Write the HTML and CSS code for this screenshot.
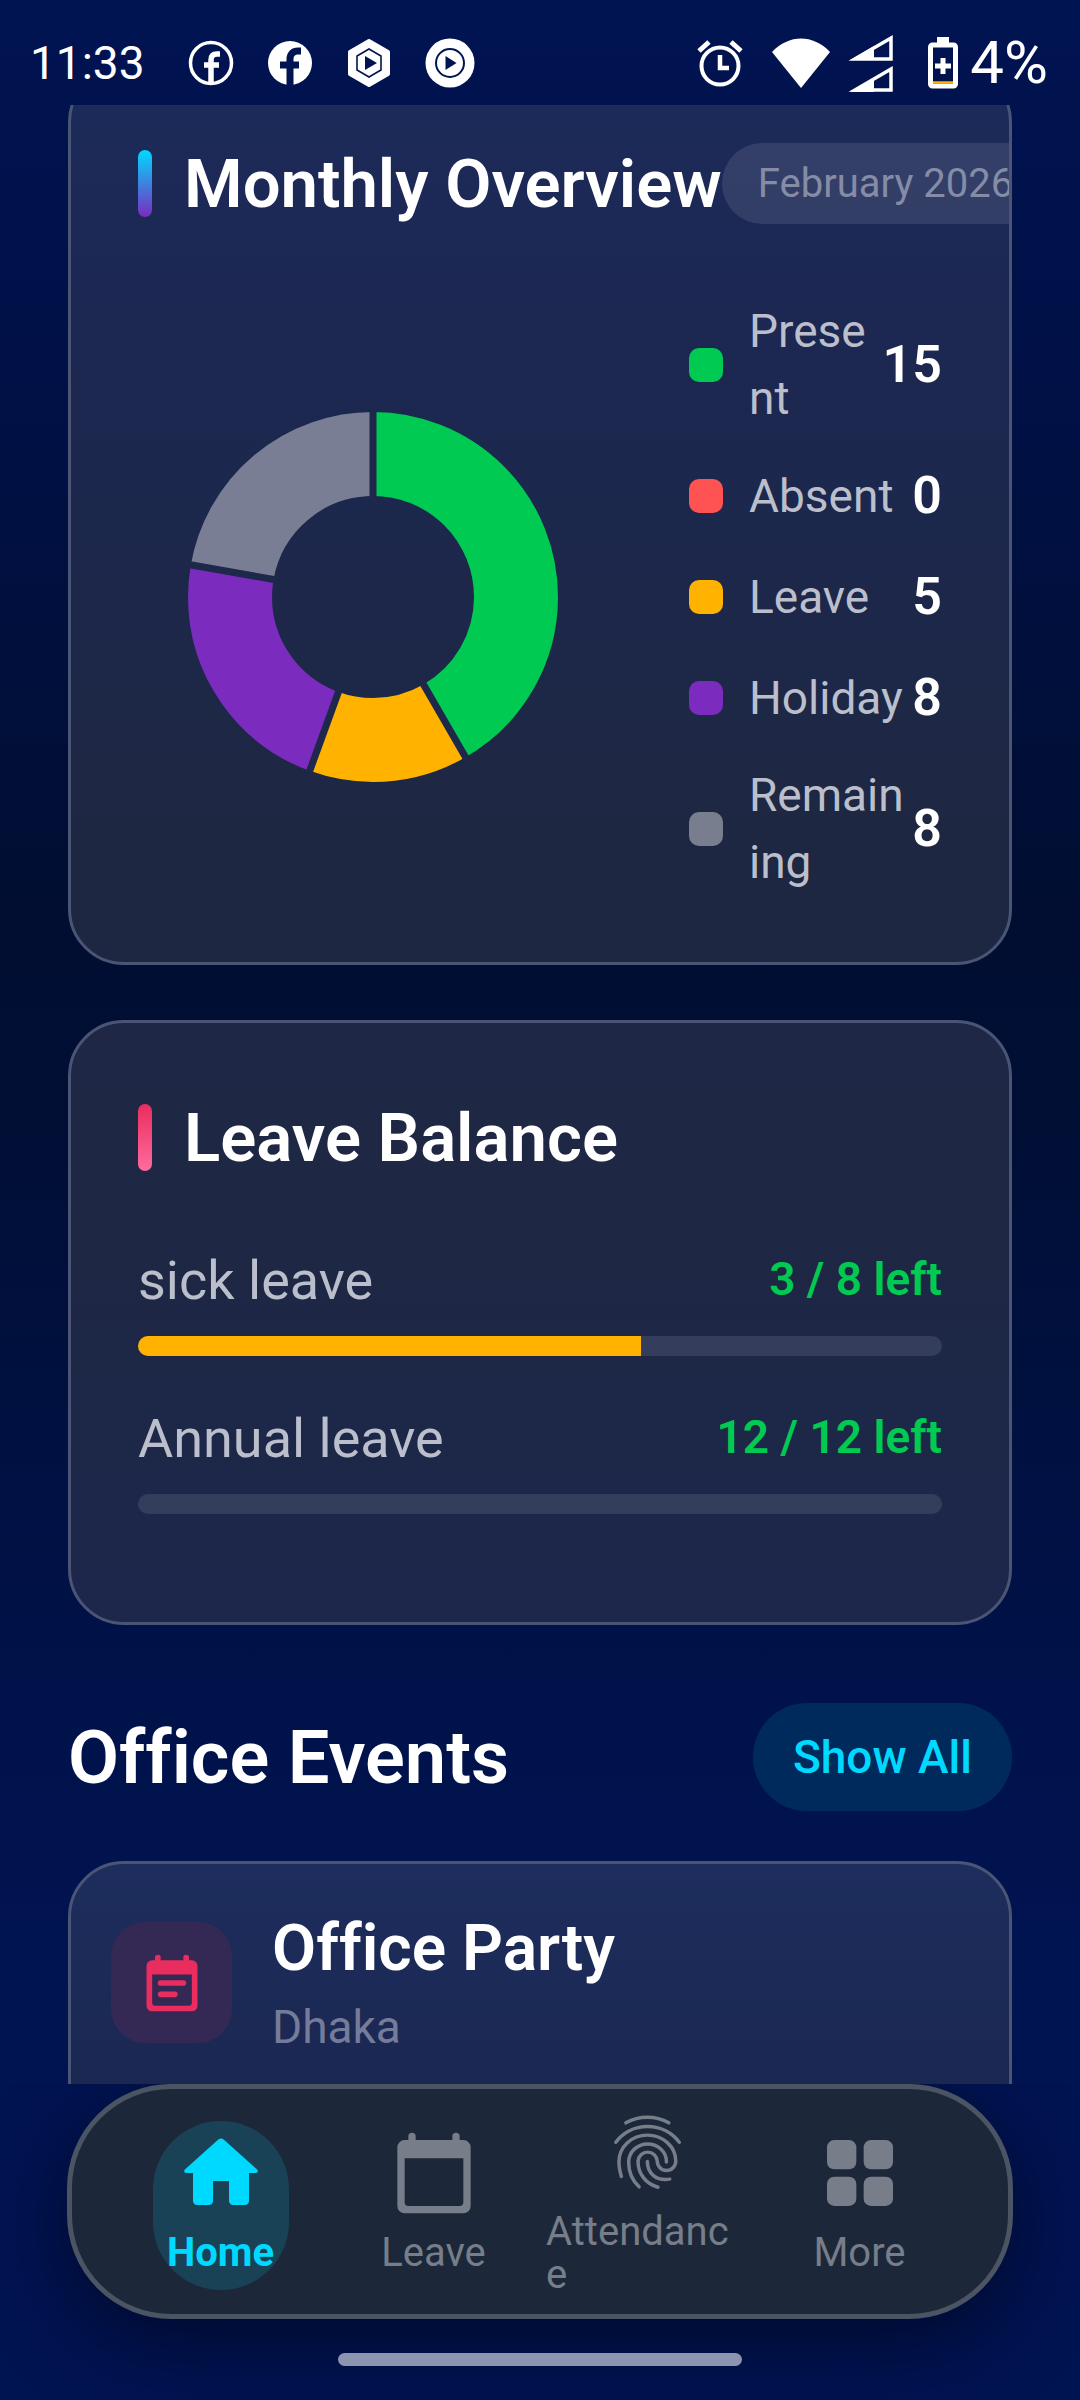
FILE: index.html
```html
<!DOCTYPE html>
<html lang="en">
<head>
  <meta charset="UTF-8">
  <meta name="viewport" content="width=device-width, initial-scale=1.0">
  <title>Home</title>
  <link rel="stylesheet" href="styles.css">
</head>
<body>
  <div class="app">
    <header class="status-bar">
      <span class="time">11:33</span>
      <div class="status-apps">
        <svg width="46" height="48" viewBox="0 0 46 48" fill="none" stroke="#fff">
          <circle cx="23" cy="24" r="20.5" stroke-width="3.5"/>
          <path d="M32 15h-3c-4 0-6 2-6 6v23M16 26h15" stroke-width="5.5"/>
        </svg>
        <svg width="46" height="48" viewBox="0 0 46 48" fill="none">
          <circle cx="23" cy="24" r="22" fill="#fff"/>
          <path d="M34 12h-3c-5 0-8 3-8 8v27M13 26h19" stroke="#001452" stroke-width="7"/>
        </svg>
        <svg width="46" height="50" viewBox="0 0 46 50">
          <path d="M23 3l19 11v22L23 47 4 36V14z" fill="#fff" stroke="#fff" stroke-width="4" stroke-linejoin="round"/>
          <path d="M23 11l12 7v14l-12 7-12-7V18z" fill="none" stroke="#001452" stroke-width="1.6"/>
          <path d="M19 18v14l12-7z" fill="#001452"/>
        </svg>
        <svg width="50" height="50" viewBox="0 0 50 50">
          <circle cx="25" cy="25" r="24.5" fill="#fff"/>
          <circle cx="25" cy="25" r="14" fill="none" stroke="#001452" stroke-width="2"/>
          <path d="M20.5 18v14l11-7z" fill="#001452"/>
        </svg>
      </div>
      <div class="status-system">
        <svg width="48" height="50" viewBox="0 0 48 50" fill="none" stroke="#fff">
          <circle cx="24" cy="28" r="18.5" stroke-width="4"/>
          <path d="M24 17v13h9" stroke-width="4.5"/>
          <path d="M3 13l10-9M45 13L35 4" stroke-width="5"/>
        </svg>
        <svg class="wifi" width="58" height="50" viewBox="0 0 58 50" fill="#fff">
          <path d="M29 50L0 14C17-4 41-4 58 14z"/>
        </svg>
        <svg width="48" height="60" viewBox="0 0 48 60" fill="none" stroke="#fff">
          <path d="M8 26L44 5v21z" stroke-width="3.500"/>
          <path d="M3 27l24-14v14zM3 59l24-14v14z" fill="#fff" stroke="none"/>
          <path d="M8 57L44 36v21z" stroke-width="3.500"/>
        </svg>
        <svg class="battery" width="30" height="52" viewBox="0 0 30 52">
          <path d="M9 0h12v8H9z" fill="#fff"/>
          <rect x="2.500" y="8" width="25" height="41" rx="2" fill="none" stroke="#fff" stroke-width="5"/>
          <path d="M15 21v16M7 29h16" stroke="#fff" stroke-width="5"/>
          <path d="M5 45.500h20" stroke="#ffb300" stroke-width="2.500"/>
        </svg>
        <span class="battery-level">4%</span>
      </div>
    </header>

    <main class="content">
      <section class="card card-overview">
        <div class="card-header">
          <span class="accent accent-blue"></span>
          <h2>Monthly Overview</h2>
          <span class="month-pill">February 2026</span>
        </div>
        <div class="overview-body">
          <div class="chart">
            <!-- r=143 ring, pathLength 36 = one unit per day counted -->
            <svg width="370" height="370" viewBox="-185 -185 370 370" fill="none" stroke-width="84">
              <g transform="rotate(-90)">
                <circle r="143" pathLength="36" stroke="#00ca51" stroke-dasharray="15 21"/>
                <circle r="143" pathLength="36" stroke="#ffb300" stroke-dasharray="5 31" stroke-dashoffset="-15"/>
                <circle r="143" pathLength="36" stroke="#7b2cbf" stroke-dasharray="8 28" stroke-dashoffset="-20"/>
                <circle r="143" pathLength="36" stroke="#797e94" stroke-dasharray="8 28" stroke-dashoffset="-28"/>
              </g>
              <g stroke="#1d284b" stroke-width="7">
                <path d="M0-95v-95"/>
                <path d="M0-95v-95" transform="rotate(150)"/>
                <path d="M0-95v-95" transform="rotate(200)"/>
                <path d="M0-95v-95" transform="rotate(280)"/>
              </g>
            </svg>
          </div>
          <ul class="legend">
            <li><i class="dot present"></i><span>Present</span><b>15</b></li>
            <li><i class="dot absent"></i><span>Absent</span><b>0</b></li>
            <li><i class="dot leave"></i><span>Leave</span><b>5</b></li>
            <li><i class="dot holiday"></i><span>Holiday</span><b>8</b></li>
            <li><i class="dot remaining"></i><span>Remaining</span><b>8</b></li>
          </ul>
        </div>
      </section>

      <section class="card card-balance">
        <div class="card-header">
          <span class="accent accent-pink"></span>
          <h2>Leave Balance</h2>
        </div>
        <div class="balance-row">
          <div class="balance-text"><span>sick leave</span><b>3 / 8 left</b></div>
          <div class="bar"><div class="bar-fill" style="width: 62.5%"></div></div>
        </div>
        <div class="balance-row">
          <div class="balance-text"><span>Annual leave</span><b>12 / 12 left</b></div>
          <div class="bar"><div class="bar-fill" style="width: 0%"></div></div>
        </div>
      </section>

      <div class="events-header">
        <h1>Office Events</h1>
        <button class="show-all" type="button">Show All</button>
      </div>

      <section class="card card-event">
        <div class="event-icon">
          <svg width="68" height="68" viewBox="0 0 24 24" fill="#e92d5f">
            <path d="M19 4h-1V3a1 1 0 0 0-2 0v1H8V3a1 1 0 0 0-2 0v1H5a2 2 0 0 0-2 2v14a2 2 0 0 0 2 2h14a2 2 0 0 0 2-2V6a2 2 0 0 0-2-2zm-1 16H6a1 1 0 0 1-1-1V9h14v10a1 1 0 0 1-1 1z"/>
            <rect x="7" y="11" width="10" height="2" rx="1"/>
            <rect x="7" y="15" width="7" height="2" rx="1"/>
          </svg>
        </div>
        <div class="event-text">
          <h3>Office Party</h3>
          <p>Dhaka</p>
        </div>
      </section>
    </main>

    <footer class="footer">
      <nav class="bottom-nav">
        <a class="nav-item active" href="#home">
          <svg class="nav-icon" viewBox="1 1 22 22" fill="currentColor">
            <path d="M10 19v-5h4v5c0 .55.45 1 1 1h3c.55 0 1-.45 1-1v-7h1.700c.46 0 .68-.57.33-.87L12.670 3.600c-.38-.34-.96-.34-1.340 0l-8.360 7.530c-.34.300-.13.870.33.870H5v7c0 .55.45 1 1 1h3c.55 0 1-.45 1-1z"/>
          </svg>
          <span>Home</span>
        </a>
        <a class="nav-item" href="#leave">
          <svg class="nav-icon" viewBox="0 0 24 24" fill="currentColor">
            <path d="M20 3h-1V2a1 1 0 0 0-2 0v1H7V2a1 1 0 0 0-2 0v1H4a2 2 0 0 0-2 2v16a2 2 0 0 0 2 2h16a2 2 0 0 0 2-2V5a2 2 0 0 0-2-2zm-1 18H5a1 1 0 0 1-1-1V8h16v12a1 1 0 0 1-1 1z"/>
          </svg>
          <span>Leave</span>
        </a>
        <a class="nav-item" href="#attendance">
          <svg class="nav-icon" viewBox="0 0 24 24" fill="none" stroke="currentColor" stroke-width="0.95" stroke-linecap="round">
            <path d="M6.250 4.050a11.800 11.800 0 0 1 11.700 0"/>
            <path d="M3.500 9.350a10.850 10.850 0 0 1 17.300 0"/>
            <path d="M5 18.700C4.600 17.200 4.350 16 4.350 14.700C4.350 10.500 7.900 7.400 12.100 7.400S19.850 10.500 19.850 14.500A2.500 2.500 0 0 1 14.800 14.500A2.630 2.630 0 0 0 9.550 14.500C9.550 18 11.800 20.800 15 21.600"/>
            <path d="M17.300 14.700C17.300 11.800 14.900 9.800 12.150 9.800S7 11.900 7 14.800C7 17.500 8 19.800 9.850 21.500"/>
            <path d="M12.100 14.600C12.100 17.800 14.500 20 18.200 19.400"/>
          </svg>
          <span>Attendance</span>
        </a>
        <a class="nav-item" href="#more">
          <svg class="nav-icon" viewBox="0 0 24 24" fill="currentColor">
            <rect x="3" y="3" width="8" height="8" rx="2"/>
            <rect x="13" y="3" width="8" height="8" rx="2"/>
            <rect x="3" y="13" width="8" height="8" rx="2"/>
            <rect x="13" y="13" width="8" height="8" rx="2"/>
          </svg>
          <span>More</span>
        </a>
      </nav>
      <div class="home-indicator"></div>
    </footer>
  </div>
</body>
</html>
```

FILE: styles.css
```css
* {
  box-sizing: border-box;
}

body {
  margin: 0;
  background: #001452;
  color: #fff;
  font-family: Roboto, "Open Sans", sans-serif;
  font-variant-ligatures: none;
}

h1, h2, h3, p, ul {
  margin: 0;
  padding: 0;
}

h1, h2, h3, b {
  font-weight: 600;
}

.app {
  display: flex;
  flex-direction: column;
  height: 100vh;
  overflow: hidden;
  background: linear-gradient(180deg, #001452 0%, #001148 14%, #010e32 38%, #010f35 46%, #001146 66%, #001452 82%, #001452 100%);
}

/* status bar */
.status-bar {
  flex: none;
  display: flex;
  align-items: center;
  height: 105px;
  padding: 20px 32px 0 30px;
}

.time {
  font-size: 46px;
}

.status-apps {
  display: flex;
  align-items: center;
  gap: 33px;
  margin-left: 43px;
}

.status-system {
  display: flex;
  align-items: center;
  margin-left: auto;
}

.wifi {
  margin: 0 17px 0 28px;
}

.battery {
  margin: 0 12px 0 33px;
}

.battery-level {
  font-size: 60px;
  line-height: 60px;
}

/* scrolled page content */
.content {
  flex: 1;
  min-height: 0;
  overflow: hidden;
  padding: 0 68px;
}

.card {
  padding: 74px 67px 66px;
  border: 3px solid #4a5474;
  border-radius: 56px;
  overflow: hidden;
}

.card-overview {
  margin-top: -39px;
  background: linear-gradient(#1c2b5b 0%, #1c2853 25%, #1d274a 60%, #1e2742 85%);
}

.card-balance {
  margin-top: 55px;
  padding-bottom: 64px;
  background: linear-gradient(#1f2746 0%, #1e2743 30%, #1c274c 100%);
}

.card-header {
  display: flex;
  align-items: center;
  height: 81px;
}

.card-header h2 {
  flex: none;
  font-size: 67px;
}

.accent {
  flex: none;
  width: 14px;
  height: 67px;
  margin-right: 32px;
  border-radius: 7px;
}

.accent-blue {
  background: linear-gradient(#00d9ff, #7b2cbf);
}

.accent-pink {
  background: linear-gradient(#e92d5f, #ff6b9d);
}

.month-pill {
  flex: none;
  padding: 0 36px;
  border-radius: 41px;
  background: rgba(255, 255, 255, 0.1);
  color: #858ca5;
  font-size: 40px;
  line-height: 81px;
}

.overview-body {
  display: flex;
  align-items: center;
  gap: 82px;
  margin-top: 74px;
}

.chart {
  flex: 1;
}

.chart svg {
  display: block;
  margin: 0 auto;
}

.legend {
  display: flex;
  flex-direction: column;
  gap: 27px;
  width: 253px;
  list-style: none;
}

.legend li {
  display: flex;
  align-items: center;
}

.legend span {
  flex: 1;
  min-width: 0;
  color: #bbbfcc;
  font-size: 46px;
  line-height: 67px;
  word-break: break-all;
}

.legend b {
  font-size: 52px;
  line-height: 74px;
}

.dot {
  width: 34px;
  height: 34px;
  margin-right: 26px;
  border-radius: 10px;
}

.present { background: #00ca51; }
.absent { background: #ff5252; }
.leave { background: #ffb300; }
.holiday { background: #7b2cbf; }
.remaining { background: #797e8e; }

/* leave balance */
.card-balance .card-header {
  margin-bottom: 64px;
}

.balance-row {
  margin-bottom: 44px;
}

.balance-text {
  display: flex;
  justify-content: space-between;
  margin-bottom: 16px;
  line-height: 78px;
}

.balance-text span {
  color: #bbbfcc;
  font-size: 54px;
}

.balance-text b {
  color: #00ca51;
  font-size: 46px;
  line-height: 74px;
}

.bar {
  height: 20px;
  border-radius: 10px;
  background: #343d5b;
  overflow: hidden;
}

.bar-fill {
  height: 100%;
  background: #ffb300;
}

/* events */
.events-header {
  display: flex;
  align-items: center;
  justify-content: space-between;
  margin: 78px 0 50px;
}

.events-header h1 {
  font-size: 74px;
}

.show-all {
  height: 108px;
  padding: 0 40px;
  border: none;
  border-radius: 54px;
  background: #002a5b;
  color: #00d9ff;
  font-family: inherit;
  font-size: 46px;
  font-weight: 500;
  cursor: pointer;
}

.card-event {
  display: flex;
  gap: 40px;
  padding: 46px 40px 80px;
  background: linear-gradient(#1d2d5d 0%, #1a264e 100%);
}

.event-icon {
  display: flex;
  align-items: center;
  justify-content: center;
  width: 121px;
  height: 121px;
  margin-top: 12px;
  border-radius: 34px;
  background: #342954;
}

.event-text h3 {
  font-size: 64px;
  line-height: 78px;
}

.event-text p {
  margin-top: 6px;
  color: #747c9a;
  font-size: 46px;
  line-height: 66px;
}

/* bottom navigation */
.footer {
  flex: none;
  height: 316px;
  padding: 0 67px;
  overflow: hidden;
}

.bottom-nav {
  display: flex;
  height: 235px;
  padding: 0 42px;
  border: 5px solid #4b5463;
  border-radius: 104px;
  background: #1c2839;
  box-shadow: 0 22px 80px rgba(0, 8, 36, 0.8);
}

.nav-item {
  position: relative;
  flex: 1;
  display: flex;
  flex-direction: column;
  align-items: center;
  justify-content: center;
  gap: 14px;
  min-width: 0;
  padding: 0 6px;
  color: #777d89;
  font-size: 40px;
  line-height: 43px;
  text-decoration: none;
}

.nav-item span {
  position: relative;
  word-break: break-all;
}

.nav-icon {
  position: relative;
  flex: none;
  width: 88px;
  height: 88px;
}

.nav-item.active {
  color: #00d9ff;
  font-weight: 700;
}

/* highlight behind the active tab */
.nav-item.active::before {
  content: "";
  position: absolute;
  top: 32px;
  left: 50%;
  width: 136px;
  height: 169px;
  margin-left: -68px;
  border-radius: 68px;
  background: #1a4257;
}

.home-indicator {
  position: relative;
  width: 404px;
  height: 13px;
  margin: 34px auto 0;
  border-radius: 7px;
  background: #8d94af;
}
```
